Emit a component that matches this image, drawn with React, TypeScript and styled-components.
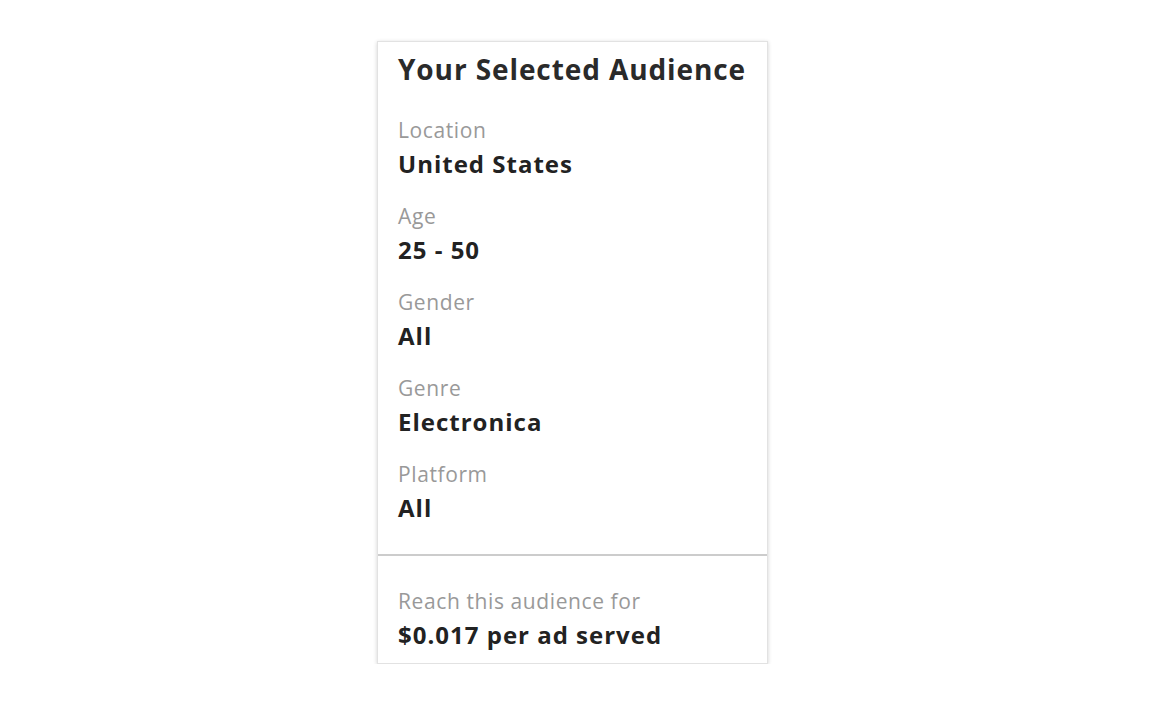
import React from 'react';
import styled, { createGlobalStyle } from 'styled-components';

const GlobalStyle = createGlobalStyle`
  body {
    margin: 0;
    background: #ffffff;
    font-family: "Open Sans", Lato, sans-serif;
  }
`;

const Page = styled.div`
  padding: 41px 0 0 377px;
`;

const Card = styled.div`
  width: 389px;
  background: #fff;
  border: 1px solid #e2e2e2;
  box-shadow: 0 1px 4px rgba(0, 0, 0, 0.18);
`;

const Body = styled.div`
  padding: 10px 20px 30px;
`;

const Title = styled.h2`
  margin: 0 0 28px;
  font-size: 28px;
  font-weight: 700;
  line-height: 34px;
  letter-spacing: 0.9px;
  color: #2a2a2a;
`;

const Field = styled.div`
  display: flex;
  flex-direction: column;
  margin-bottom: 20px;

  &:last-child {
    margin-bottom: 0;
  }
`;

const Label = styled.span`
  font-size: 21px;
  line-height: 33px;
  letter-spacing: 0.6px;
  color: #999999;
`;

const Value = styled.span`
  font-size: 24px;
  font-weight: 700;
  line-height: 33px;
  letter-spacing: 1px;
  color: #222222;
`;

const Footer = styled.div`
  border-top: 2px solid #cccccc;
  padding: 29px 20px 12px;
`;

const fields = [
  { label: 'Location', value: 'United States' },
  { label: 'Age', value: '25 - 50' },
  { label: 'Gender', value: 'All' },
  { label: 'Genre', value: 'Electronica' },
  { label: 'Platform', value: 'All' },
];

const App: React.FC = () => {
  return (
    <Page>
      <GlobalStyle />
      <Card>
        <Body>
          <Title>Your Selected Audience</Title>
          {fields.map((f) => (
            <Field key={f.label}>
              <Label>{f.label}</Label>
              <Value>{f.value}</Value>
            </Field>
          ))}
        </Body>
        <Footer>
          <Field>
            <Label>Reach this audience for</Label>
            <Value>$0.017 per ad served</Value>
          </Field>
        </Footer>
      </Card>
    </Page>
  );
};

export default App;
